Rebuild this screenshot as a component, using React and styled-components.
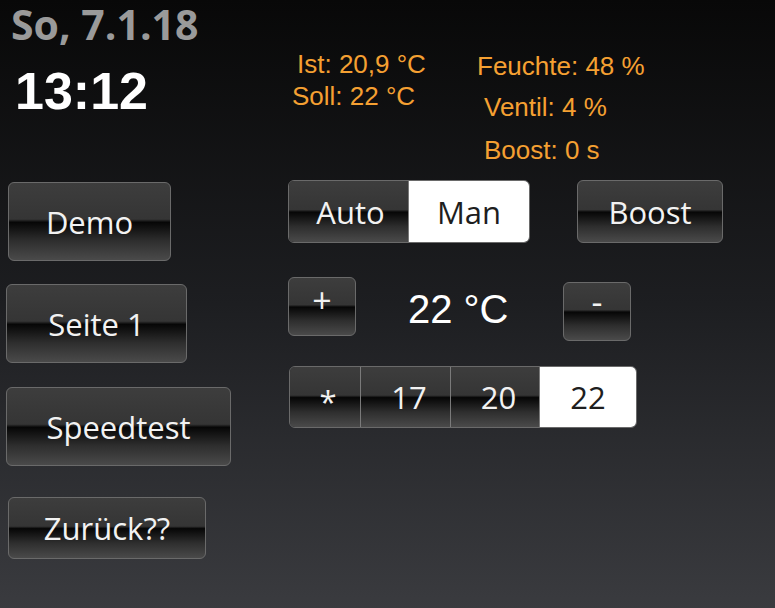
import React from 'react';
import styled, { createGlobalStyle } from 'styled-components';

const GlobalStyle = createGlobalStyle`
  html, body {
    margin: 0;
    padding: 0;
    background: #0b0b0b;
  }
`;

const Screen = styled.div`
  width: 775px;
  height: 608px;
  display: flex;
  overflow: hidden;
  background: linear-gradient(180deg, #080808 0%, #1d1e21 50%, #3a3b3f 100%);
`;

const LeftColumn = styled.div`
  width: 288px;
  display: flex;
  flex-direction: column;
  align-items: flex-start;
`;

const RightColumn = styled.div`
  flex: 1;
  display: flex;
  flex-direction: column;
  align-items: flex-start;
`;

const DateText = styled.div`
  margin: 0 0 0 11px;
  font-family: "Open Sans", sans-serif;
  font-weight: 700;
  font-size: 41px;
  line-height: 49px;
  color: #9a9a9a;
`;

const Clock = styled.div`
  margin: 16px 0 0 15px;
  font-family: "Liberation Sans", Arial, sans-serif;
  font-weight: 700;
  font-size: 52px;
  line-height: 52px;
  color: #ffffff;
`;

const glass = `
  background: linear-gradient(180deg, #3d3d3d 0%, #353535 47%, #060606 51%, #101010 57%, #2e2e2e 75%, #4a4a4a 100%);
`;

const Button = styled.div`
  box-sizing: border-box;
  width: ${(p) => p.$w}px;
  height: ${(p) => p.$h}px;
  margin: ${(p) => p.$mt || 0}px 0 0 ${(p) => p.$ml || 0}px;
  padding-bottom: ${(p) => p.$lift || 0}px;
  display: flex;
  align-items: center;
  justify-content: center;
  ${glass}
  border: 1px solid #6a6a6a;
  border-radius: 6px;
  font-family: "Open Sans", sans-serif;
  font-size: ${(p) => p.$size || 31}px;
  color: #f2f2f2;
`;

const InfoRow = styled.div`
  height: 180px;
  display: grid;
  grid-template-columns: 189px auto;
  align-items: start;
`;

const InfoCol = styled.div`
  display: flex;
  flex-direction: column;
  align-items: flex-start;
  padding-left: ${(p) => p.$pl || 0}px;
`;

const InfoLine = styled.div`
  margin: ${(p) => p.$mt}px 0 0 ${(p) => p.$indent || 0}px;
  font-family: "Liberation Sans", Arial, sans-serif;
  font-size: 26px;
  line-height: 26px;
  color: #f5a032;
  white-space: nowrap;
`;

const ControlRow = styled.div`
  display: flex;
  align-items: flex-start;
  margin: ${(p) => p.$mt || 0}px 0 0 ${(p) => p.$ml || 0}px;
`;

const Group = styled.div`
  display: flex;
  height: ${(p) => p.$h}px;
  box-sizing: border-box;
  border: 1px solid #6a6a6a;
  border-radius: 6px;
  overflow: hidden;
`;

const Segment = styled.div`
  box-sizing: border-box;
  width: ${(p) => p.$w}px;
  display: flex;
  align-items: center;
  justify-content: center;
  padding-left: ${(p) => p.$shift || 0}px;
  padding-top: ${(p) => p.$drop || 0}px;
  font-family: "Open Sans", sans-serif;
  font-size: 31px;
  ${(p) => (p.$active ? 'background: #ffffff; color: #1e1e1e;' : glass + 'color: #f2f2f2;')}
  & + & {
    border-left: 1px solid #7a7a7a;
  }
`;

const Temperature = styled.div`
  margin: 12px 0 0 52px;
  font-family: "Liberation Sans", Arial, sans-serif;
  font-size: 40px;
  line-height: 40px;
  color: #ffffff;
  width: 100px;
  white-space: nowrap;
`;

const presets = [
  { label: '*', w: 70, shift: 6, drop: 8 },
  { label: '17', w: 90, shift: 7 },
  { label: '20', w: 89, shift: 7 },
  { label: '22', w: 97, active: true },
];

const App = () => (
  <>
    <GlobalStyle />
    <Screen>
      <LeftColumn>
        <DateText>So, 7.1.18</DateText>
        <Clock>13:12</Clock>
        <Button $w={163} $h={79} $mt={65} $ml={8}>Demo</Button>
        <Button $w={181} $h={79} $mt={23} $ml={6}>Seite 1</Button>
        <Button $w={225} $h={79} $mt={24} $ml={6}>Speedtest</Button>
        <Button $w={198} $h={62} $mt={31} $ml={8}>Zurück??</Button>
      </LeftColumn>
      <RightColumn>
        <InfoRow>
          <InfoCol $pl={4}>
            <InfoLine $mt={51} $indent={5}>Ist: 20,9 °C</InfoLine>
            <InfoLine $mt={6}>Soll: 22 °C</InfoLine>
          </InfoCol>
          <InfoCol>
            <InfoLine $mt={53}>Feuchte: 48 %</InfoLine>
            <InfoLine $mt={15} $indent={7}>Ventil: 4 %</InfoLine>
            <InfoLine $mt={17} $indent={7}>Boost: 0 s</InfoLine>
          </InfoCol>
        </InfoRow>
        <ControlRow>
          <Group $h={63}>
            <Segment $w={119} $shift={4}>Auto</Segment>
            <Segment $w={121} $active>Man</Segment>
          </Group>
          <Button $w={146} $h={63} $ml={47}>Boost</Button>
        </ControlRow>
        <ControlRow $mt={34}>
          <Button $w={68} $h={59} $lift={14} $size={34}>+</Button>
          <Temperature>22 °C</Temperature>
          <Button $w={68} $h={59} $mt={5} $ml={55} $lift={22} $size={34}>-</Button>
        </ControlRow>
        <ControlRow $mt={25} $ml={1}>
          <Group $h={62}>
            {presets.map((p) => (
              <Segment key={p.label} $w={p.w} $active={p.active} $shift={p.shift} $drop={p.drop}>
                {p.label}
              </Segment>
            ))}
          </Group>
        </ControlRow>
      </RightColumn>
    </Screen>
  </>
);

export default App;
